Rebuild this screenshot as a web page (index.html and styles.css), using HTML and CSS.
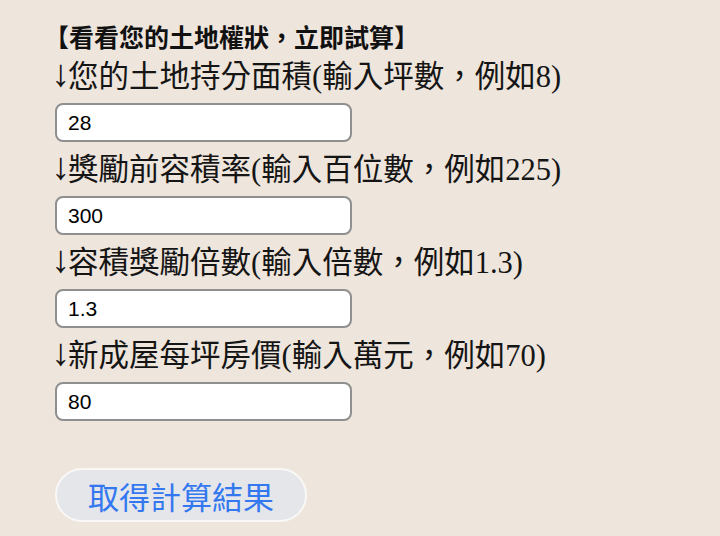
FILE: index.html
```html
<!DOCTYPE html>
<html lang="zh-Hant">
<head>
<meta charset="utf-8">
<title>土地權狀試算</title>
<link rel="stylesheet" href="styles.css">
</head>
<body>
<main class="page">
  <p class="title">【看看您的土地權狀，立即試算】</p>
  <div class="field">
    <label class="label" for="f1"><span class="arrow">↓</span>您的土地持分面積(輸入坪數，例如8)</label>
    <input class="input" id="f1" type="text" value="28">
  </div>
  <div class="field">
    <label class="label" for="f2"><span class="arrow">↓</span>獎勵前容積率(輸入百位數，例如225)</label>
    <input class="input" id="f2" type="text" value="300">
  </div>
  <div class="field">
    <label class="label" for="f3"><span class="arrow">↓</span>容積獎勵倍數(輸入倍數，例如1.3)</label>
    <input class="input" id="f3" type="text" value="1.3">
  </div>
  <div class="field">
    <label class="label" for="f4"><span class="arrow">↓</span>新成屋每坪房價(輸入萬元，例如70)</label>
    <input class="input" id="f4" type="text" value="80">
  </div>
  <button class="button" type="button">取得計算結果</button>
</main>
</body>
</html>
```
FILE: styles.css
```css
html, body {
  margin: 0;
  padding: 0;
  background: #eee5dc;
}

.page {
  display: flex;
  flex-direction: column;
  align-items: flex-start;
  padding: 24px 0 0 51px;
}

.title {
  margin: 0 0 7px -7px;
  font-family: "Noto Sans CJK TC", sans-serif;
  font-weight: 700;
  font-size: 25px;
  line-height: 24px;
  color: #111;
}

.field {
  display: flex;
  flex-direction: column;
  align-items: flex-start;
}

.label {
  display: block;
  margin: 0;
  padding-top: 4px;
  font-family: "Liberation Serif", "Noto Sans CJK TC", serif;
  font-size: 30.5px;
  line-height: 36px;
  color: #151515;
}

.arrow {
  font-family: "Liberation Serif", serif;
  font-size: 38px;
  line-height: 1px;
  vertical-align: 1px;
  letter-spacing: -2px;
  color: #151515;
}

.input {
  box-sizing: border-box;
  width: 297px;
  height: 39px;
  margin: 8px 0 6px 4px;
  padding: 0 11px;
  border: 2px solid #8f8f8f;
  border-radius: 8px;
  background: #fff;
  font-family: "Liberation Sans", Arial, sans-serif;
  font-size: 21px;
  color: #000;
  outline: none;
}

.button {
  box-sizing: border-box;
  width: 252px;
  height: 54px;
  margin: 41px 0 0 4px;
  padding: 0;
  border: 2px solid #f9f8f7;
  border-radius: 27px;
  background: #e4e6ea;
  font-family: "Noto Sans CJK TC", sans-serif;
  font-size: 31px;
  color: #3478f0;
}
```
